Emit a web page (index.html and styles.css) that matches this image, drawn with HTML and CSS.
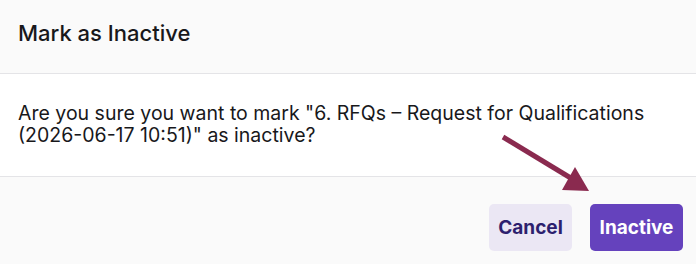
FILE: index.html
```html
<!DOCTYPE html>
<html>
<head>
<meta charset="utf-8">
<link rel="stylesheet" href="styles.css">
</head>
<body>
<div class="modal">
  <div class="modal-header"><h2 class="title">Mark as Inactive</h2></div>
  <div class="modal-body">
    <p class="message">Are you sure you want to mark "6. RFQs – Request for Qualifications (2026-06-17 10:51)" as inactive?</p>
  </div>
  <div class="modal-footer">
    <button class="btn btn-cancel">Cancel</button>
    <button class="btn btn-primary">Inactive</button>
  </div>
  <svg class="arrow" width="696" height="264" viewBox="0 0 696 264">
    <line x1="503" y1="137" x2="574" y2="180" stroke="#8a2a4f" stroke-width="5"/>
    <polygon points="575,167 562,190 589,191" fill="#8a2a4f"/>
  </svg>
</div>
</body>
</html>
```
FILE: styles.css
```css
* { box-sizing: border-box; }
html, body { margin: 0; padding: 0; }
body { width: 696px; height: 264px; overflow: hidden; background: #fafafa; font-family: Inter, "Noto Sans", sans-serif; }
.modal { position: relative; width: 696px; height: 264px; display: flex; flex-direction: column; }
.modal-header { height: 74px; background: #fafafa; border-bottom: 1px solid #e4e4e7; display: flex; align-items: center; padding: 0 18px 8px; }
.title { margin: 0; font-size: 22px; font-weight: 500; color: #18181b; }
.modal-body { height: 103px; background: #fff; border-bottom: 1px solid #e4e4e7; display: flex; align-items: center; padding: 0 18px 2px; }
.message { margin: 0; font-size: 19.5px; line-height: 22px; color: #18181b; }
.modal-footer { flex: 1; background: #fafafa; display: flex; justify-content: flex-end; align-items: flex-start; gap: 18px; padding: 27px 13px 0 0; }
.btn { font-family: Inter, sans-serif; font-weight: 700; font-size: 19px; height: 47px; border: none; border-radius: 5px; padding: 0; cursor: pointer; }
.btn-cancel { background: #ebe7f4; color: #2d1f6e; width: 83px; }
.btn-primary { background: #6542bd; color: #fff; width: 93px; }
.arrow { position: absolute; left: 0; top: 0; pointer-events: none; }
```
